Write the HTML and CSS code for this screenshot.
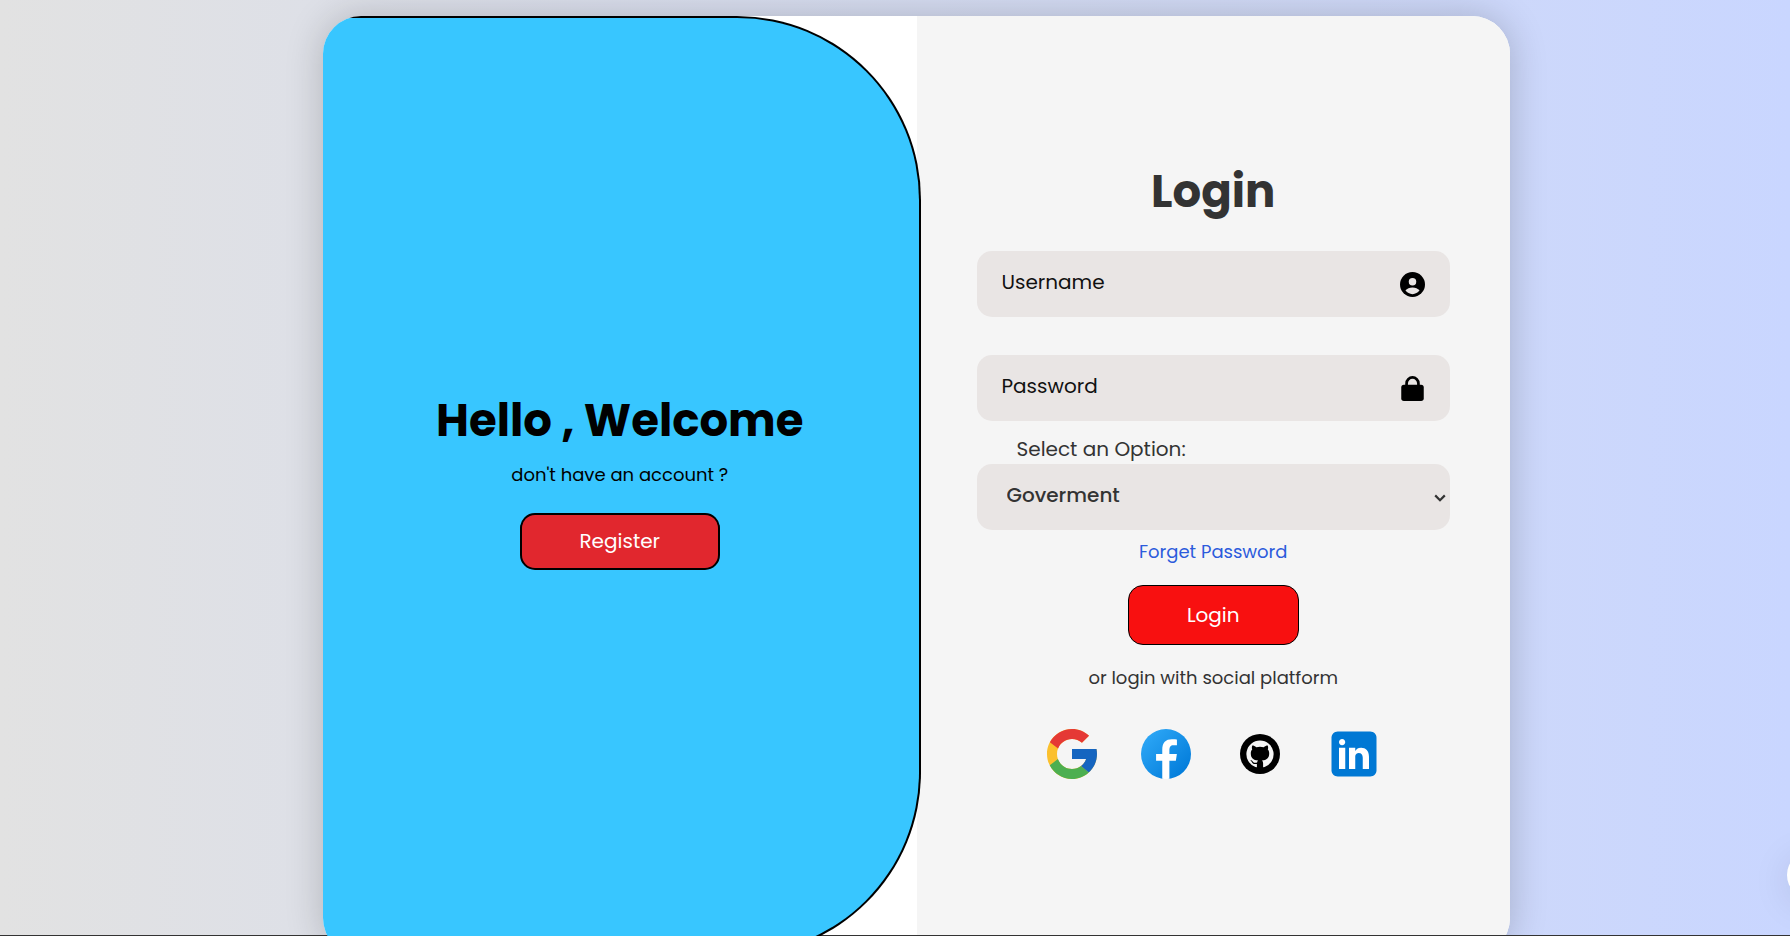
FILE: index.html
```html
<!DOCTYPE html>
<html lang="en">
<head>
<meta charset="utf-8">
<meta name="viewport" content="width=device-width, initial-scale=1">
<title>Login</title>
<link rel="stylesheet" href="styles.css">
</head>
<body>
<main class="card">
  <section class="welcome">
    <h1 class="heading">Hello , Welcome</h1>
    <p class="note">don't have an account ?</p>
    <button class="button button-register" type="button">Register</button>
  </section>
  <form class="login">
    <h1 class="heading">Login</h1>
    <div class="field">
      <input class="control" type="text" placeholder="Username" aria-label="Username">
      <svg class="field-icon" viewBox="0 0 24 24" aria-hidden="true"><circle cx="12" cy="12" r="12"/><circle cx="12" cy="9.3" r="3.6" fill="#e9e5e4"/><path d="M5.2 17.6C7 15.7 9 14.8 12 14.8s5 .9 6.8 2.8C17 20 14.8 21.3 12 21.3S7 20 5.2 17.6z" fill="#e9e5e4"/></svg>
    </div>
    <div class="field">
      <input class="control" type="password" placeholder="Password" aria-label="Password">
      <svg class="field-icon" viewBox="0 0 24 24" aria-hidden="true"><rect x="1.2" y="8.4" width="21.6" height="15.6" rx="2.6"/><path d="M6.3 9V7.1a5.7 5.7 0 0 1 11.4 0V9" fill="none" stroke="#000" stroke-width="2.6"/></svg>
    </div>
    <label class="select-label" for="role">Select an Option:</label>
    <div class="field field-select">
      <select class="control control-select" id="role">
        <option>Goverment</option>
      </select>
      <svg class="chevron" viewBox="0 0 12 12" aria-hidden="true"><path d="M1.2 3.4 6 8.2l4.8-4.8" fill="none" stroke="#333" stroke-width="2.2"/></svg>
    </div>
    <a class="forgot" href="#">Forget Password</a>
    <button class="button button-login" type="submit">Login</button>
    <p class="note">or login with social platform</p>
    <nav class="social" aria-label="Social login">
      <a class="social-link" href="#" aria-label="Google"><svg class="social-icon" viewBox="0 0 48 48"><path fill="#fbc02d" d="M43.611 20.083H42V20H24v8h11.303c-1.649 4.657-6.08 8-11.303 8-6.627 0-12-5.373-12-12s5.373-12 12-12c3.059 0 5.842 1.154 7.961 3.039l5.657-5.657C34.046 6.053 29.268 4 24 4 12.955 4 4 12.955 4 24s8.955 20 20 20 20-8.955 20-20c0-1.341-.138-2.65-.389-3.917z"/><path fill="#e53935" d="m6.306 14.691 6.571 4.819C14.655 15.108 18.961 12 24 12c3.059 0 5.842 1.154 7.961 3.039l5.657-5.657C34.046 6.053 29.268 4 24 4 16.318 4 9.656 8.337 6.306 14.691z"/><path fill="#4caf50" d="M24 44c5.166 0 9.86-1.977 13.409-5.192l-6.19-5.238C29.211 35.091 26.715 36 24 36c-5.202 0-9.619-3.317-11.283-7.946l-6.522 5.025C9.505 39.556 16.227 44 24 44z"/><path fill="#1565c0" d="M43.611 20.083 43.595 20H24v8h11.303c-.792 2.237-2.231 4.166-4.087 5.571l.003-.002 6.19 5.238C36.971 39.205 44 34 44 24c0-1.341-.138-2.65-.389-3.917z"/></svg></a>
      <a class="social-link" href="#" aria-label="Facebook"><svg class="social-icon" viewBox="0 0 48 48"><defs><linearGradient id="fb" x1="9.993" x2="40.615" y1="9.993" y2="40.615" gradientUnits="userSpaceOnUse"><stop offset="0" stop-color="#2aa4f4"/><stop offset="1" stop-color="#007ad9"/></linearGradient></defs><circle cx="24" cy="24" r="20" fill="url(#fb)"/><path fill="#fff" d="M26.707 29.301h5.176l.813-5.258h-5.989v-2.874c0-2.184.714-4.121 2.757-4.121h3.283V12.46c-.577-.078-1.797-.248-4.102-.248-4.814 0-7.636 2.542-7.636 8.334v3.498H16.06v5.258h4.948v14.452C21.988 43.9 22.981 44 24 44c.921 0 1.82-.084 2.707-.204V29.301z"/></svg></a>
      <a class="social-link" href="#" aria-label="GitHub"><svg class="social-icon" viewBox="0 0 60 60"><circle cx="30" cy="30" r="20"/><path fill="#f5f5f5" d="M30 16.6a13.6 13.6 0 0 0-4.6 26.4l1.5.3v-3.4c-3.4.7-4.4-.6-5-1.9-.3-.8-.9-1.2-1.5-1.6.8-.6 1.8.2 2.3 1 .9 1.4 2.2 1.7 4.4 1 .1-.9.5-1.5 1-1.8-4.9-.5-7.3-2.6-7.3-7.1 0-1.8.4-2.9 1.4-4-.5-1.3-.4-2.7.1-3.9 1.4 0 2.6.7 4 1.7a14.5 14.5 0 0 1 7.4 0c1.4-1 2.6-1.7 4-1.7.5 1.2.6 2.6.1 3.9 1 1.1 1.4 2.2 1.4 4 0 4.5-2.4 6.6-7.3 7.1.8.7 1.2 1.6 1.2 3v3.7l1.5-.3A13.6 13.6 0 0 0 30 16.6z"/></svg></a>
      <a class="social-link" href="#" aria-label="LinkedIn"><svg class="social-icon" viewBox="0 0 48 48"><path fill="#0078d4" d="M42 37c0 2.762-2.238 5-5 5H11c-2.761 0-5-2.238-5-5V11c0-2.762 2.239-5 5-5h26c2.762 0 5 2.238 5 5v26z"/><path fill="#fff" d="M12 19h5v17h-5zM14.485 17h-.028C12.965 17 12 15.888 12 14.499 12 13.08 12.995 12 14.514 12c1.521 0 2.458 1.08 2.486 2.499C17 15.887 16.035 17 14.485 17zM36 36h-5v-9.099c0-2.198-1.225-3.698-3.192-3.698-1.501 0-2.313 1.012-2.707 1.99-.144.35-.101 1.318-.101 1.807v9h-5V19h5v2.616C25.721 20.5 26.85 19 29.738 19c3.578 0 6.261 2.25 6.261 7.274L36 36z"/></svg></a>
    </nav>
  </form>
</main>
<div class="floating"></div>
<div class="window-edge"></div>
</body>
</html>
```
FILE: styles.css
```css
* {
  box-sizing: border-box;
  margin: 0;
  padding: 0;
}

body {
  height: 100vh;
  padding: 16px 0 0 43px;
  overflow: hidden;
  display: flex;
  justify-content: center;
  align-items: flex-start;
  background: linear-gradient(90deg, #e2e2e2, #c9d6ff);
  color: #333;
  font-family: Poppins, Inter, "Liberation Sans", sans-serif;
}

.card {
  position: relative;
  display: grid;
  grid-template-columns: 1fr 1fr;
  flex: none;
  width: 100%;
  max-width: 1187px;
  min-height: 940px;
  overflow: hidden;
  border-radius: 38px;
  background: #fff;
  box-shadow: 0 0 38px rgba(0, 0, 0, .2);
}

.welcome,
.login {
  display: flex;
  flex-direction: column;
  align-items: center;
  justify-content: center;
}

.welcome {
  z-index: 1;
  margin-right: -4px;
  padding: 0 2px 13px 0;
  border: 2px solid #000;
  border-left: 0;
  border-radius: 0 184px 184px 0;
  background: #38c6ff;
  color: #000;
}

.login {
  padding: 0 60px 27px;
  background: #f5f5f5;
}

.heading {
  font-size: 45px;
  line-height: 62px;
  font-weight: 700;
}

.note,
.forgot {
  font-size: 18px;
  line-height: 28px;
}

.welcome .note {
  margin: 9px 0 24px;
}

.button {
  border: 1px solid #000;
  border-radius: 15px;
  color: #fff;
  font: 400 20px/28px Poppins, Inter, "Liberation Sans", sans-serif;
}

.button-register {
  width: 200px;
  height: 57px;
  border-width: 2px;
  background: #e1272e;
}

.button-login {
  width: 171px;
  height: 60px;
  margin: 19px 0;
  background: #f81010;
}

.field {
  position: relative;
  width: 100%;
  margin-top: 38px;
}

.heading + .field {
  margin-top: 28px;
}

.control {
  display: block;
  width: 100%;
  height: 66px;
  padding: 0 62px 4px 25px;
  border: 0;
  outline: 0;
  border-radius: 15px;
  background: #e9e5e4;
  color: #333;
  font: 400 20px/28px Poppins, Inter, "Liberation Sans", sans-serif;
}

.control::placeholder {
  color: #111;
  opacity: 1;
}

.field-icon {
  position: absolute;
  top: 21px;
  right: 25px;
  width: 25px;
  height: 25px;
}

.select-label {
  align-self: flex-start;
  margin: 13px 0 0 40px;
  font-size: 20px;
  line-height: 30px;
}

.field-select {
  margin-top: 0;
}

.control-select {
  appearance: none;
  padding: 0 40px 4px 30px;
  font-weight: 500;
}

.chevron {
  position: absolute;
  top: 28px;
  right: 4px;
  width: 12px;
  height: 12px;
  pointer-events: none;
}

.forgot {
  margin-top: 8px;
  color: #2c5bdc;
  text-decoration: none;
}

.social {
  display: flex;
  gap: 34px;
  margin-top: 32px;
}

.social-icon {
  display: block;
  width: 60px;
  height: 60px;
}

.floating {
  position: fixed;
  right: -45px;
  bottom: 37px;
  width: 48px;
  height: 48px;
  border-radius: 50%;
  background: #fff;
  box-shadow: 0 6px 38px rgba(0, 0, 0, .1);
}

.window-edge {
  position: fixed;
  inset: auto 0 0;
  height: 1px;
  background: #333;
}
```
